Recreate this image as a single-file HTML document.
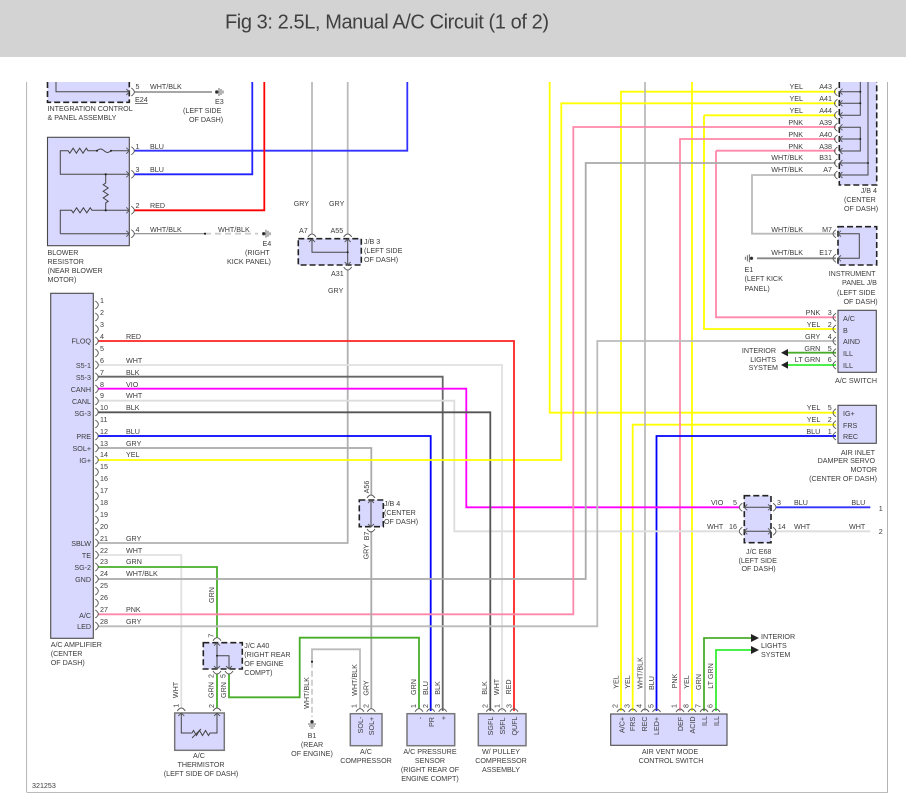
<!DOCTYPE html>
<html><head><meta charset="utf-8"><title>Fig 3</title>
<style>
html,body{margin:0;padding:0;background:#fff;width:906px;height:809px;overflow:hidden}
svg{display:block}
text{font-family:"Liberation Sans",sans-serif;font-size:7.15px;fill:#3c3c3c}
.e{text-anchor:end}.m{text-anchor:middle}
.w{fill:none;stroke-width:1.8;stroke-linejoin:miter}
.i{fill:none;stroke:#444;stroke-width:1}
.b{fill:#d8d8ff;stroke:#4a4a4a;stroke-width:1.1}
.bg{fill:#d8d8ff;stroke:#777;stroke-width:1.5}
.d{fill:#d8d8ff;stroke:#222;stroke-width:1.6;stroke-dasharray:6 3}
.c{fill:none;stroke:#555;stroke-width:.9}
</style></head><body>
<svg width="906" height="809" viewBox="0 0 906 809" xmlns="http://www.w3.org/2000/svg">
<defs>
<filter id="s" x="0" y="0" width="100%" height="100%"><feGaussianBlur stdDeviation="0.25"/></filter>
<g id="cr" class="c"><path d="M-3-3L0 0L-3 3M2-4Q5-2 5 0Q5 2 2 4"/></g>
<g id="cl" class="c"><path d="M3-3L0 0L3 3M-2-4Q-5-2-5 0Q-5 2-2 4"/></g>
<g id="ct" class="c"><path d="M-3 3L0 0L3 3M-4-2Q-2-5 0-5Q2-5 4-2"/></g>
<g id="cb" class="c"><path d="M-3-3L0 0L3-3M-4 2Q-2 5 0 5Q2 5 4 2"/></g>
<g id="car" class="c"><path d="M2-4Q5-2 5 0Q5 2 2 4"/></g>
<g id="cal" class="c"><path d="M-2-4Q-5-2-5 0Q-5 2-2 4"/></g>
<g id="cat" class="c"><path d="M-4-2Q-2-5 0-5Q2-5 4-2"/></g>
</defs>
<rect width="906" height="57" fill="#d3d3d3"/>
<text x="225" y="28.5" style="font-size:20px;fill:#404040" textLength="324" lengthAdjust="spacing">Fig 3: 2.5L, Manual A/C Circuit (1 of 2)</text>
<g filter="url(#s)">
<path d="M26.5 82V792.5H888V82" fill="none" stroke="#777" stroke-width="1.1"/>

<!-- boxes -->
<path d="M47.5 82V102.3H129.3V82" class="d"/>
<rect x="47.5" y="137.3" width="81.8" height="108.4" class="b"/>
<rect x="50.7" y="293.3" width="42.6" height="345" class="b"/>
<rect x="298.3" y="238.7" width="63" height="26.3" class="d"/>
<rect x="359.3" y="500" width="24" height="26.7" class="d"/>
<rect x="203.3" y="642.7" width="39" height="26.3" class="d"/>
<rect x="174.7" y="713" width="49.6" height="37.3" class="bg"/>
<rect x="350.3" y="713.7" width="31.7" height="32" class="bg"/>
<rect x="407" y="713.7" width="47.7" height="32" class="bg"/>
<rect x="478.3" y="713.7" width="47.7" height="32" class="bg"/>
<rect x="610.7" y="714" width="116.3" height="31.3" class="b"/>
<path d="M839.3 82V185H876.7V82" class="d"/>
<rect x="838" y="226.7" width="38.7" height="38.3" class="d"/>
<rect x="838" y="310.3" width="38.3" height="62" class="b"/>
<rect x="838" y="405.3" width="38.3" height="38" class="b"/>
<rect x="744.3" y="495.7" width="26.7" height="47" class="d"/>

<!-- wires -->
<g class="w">
<path stroke="#bbb" d="M312 82V234"/>
<path stroke="#bbb" d="M347.7 82V234"/>
<path stroke="#b0b0b0" d="M97.7 543H347.7V270"/>
<path stroke="#3333ff" d="M134 150.7H407.3V82"/>
<path stroke="#2222ff" d="M134 174.3H252.3V82"/>
<path stroke="#ff0000" d="M134 210.3H264.3V82"/>
<path stroke="#999" d="M134 92H212"/>
<path stroke="#888" d="M134 233.7H205" stroke-width="1.1"/>
<path stroke="#ccc" d="M205 233.7H258" stroke-dasharray="6 4"/>

<path stroke="#ffff00" d="M549.7 82V412.7H836"/>
<path stroke="#ffff00" d="M692 82V711"/>
<path stroke="#ffff00" d="M621 711V91.7H836"/>
<path stroke="#ffff00" d="M632.7 711V424.7H836"/>
<path stroke="#ffff00" d="M704 115.3H836M704 115.3V329H836"/>
<path stroke="#bbb" d="M645 82V711"/>
<path stroke="#ff88aa" d="M680 711V139H836"/>
<path stroke="#ff88aa" d="M716 150.7H836M716 150.7V317.3H836"/>
<path stroke="#0000ff" d="M656.5 711V436H836"/>
<path stroke="#bbb" d="M836 175H752V233.7H836"/>
<path stroke="#888" d="M757 258.3H836"/>
<path stroke="#4aad2a" d="M788 352.7H836"/>
<path stroke="#33ee33" d="M788 365H836"/>

<path stroke="#e0e0e0" d="M97.7 365H502V711"/>
<path stroke="#666" d="M97.7 376.7H442.7V711"/>
<path stroke="#ff00ff" d="M97.7 388.7H466.3V507.3H739"/>
<path stroke="#ddd" d="M97.7 400.7H454.3V531.3H739"/>
<path stroke="#555" d="M97.7 412.3H490.3V711"/>
<path stroke="#0000ff" d="M97.7 436H430.7V711"/>
<path stroke="#aaa" d="M97.7 448H371.3V495"/>
<path stroke="#ffff00" d="M97.7 460H561.3V103.3H836"/>
<path stroke="#ff2222" d="M97.7 341H514V711"/>
<path stroke="#e0e0e0" d="M97.7 555H181.3V708"/>
<path stroke="#4aad2a" d="M97.7 567H217V638"/>
<path stroke="#aaa" d="M97.7 579H585.7V163H836"/>
<path stroke="#ff88aa" d="M97.7 614.3H573.3V127H836"/>
<path stroke="#bbb" d="M97.7 626.3H597.3V341H836"/>
<path stroke="#aaa" d="M371.3 531V709"/>
<path stroke="#4aad2a" d="M217 674V708"/>
<path stroke="#4aad2a" d="M229 674V697.3H299.7V637.7H419V709"/>
<path stroke="#bbb" d="M312 661.7V649.3H360V709"/>
<path stroke="#ccc" d="M312 661.7V717" stroke-dasharray="6 3"/>
<path stroke="#3333ff" d="M776 507.3H870.3"/>
<path stroke="#ddd" d="M776 531.3H870.3"/>
<path stroke="#4aad2a" d="M704 711V638H751"/>
<path stroke="#33ee33" d="M716 711V650H751"/>
</g>

<!-- internals -->
<path class="i" d="M56 82V91.7H129"/>
<path class="i" d="M129 150.7H111M97 150.7H88l-1.7-2.5-3.3 5-3.3-5-3.3 5-3.3-5-3.3 5-1.7-2.5H60.3V174.3H129"/>
<path class="i" d="M97 150.7q3.5-3.5 7 0t7 0"/>
<path class="i" d="M105.7 174.3V183l-2.5 1.7 5 3.3-5 3.3 5 3.3-5 3.3 5 3.3-2.5 1.7V210.3"/>
<path class="i" d="M129 210.3H92l-1.8-2.5-3.4 5-3.4-5-3.4 5-3.4-5-3.4 5-1.7-2.5H60.3V233.7"/>
<path class="i" d="M60.3 233.7H129" stroke-width="1.5"/>
<path class="i" d="M312 239V252.3H347.7M347.7 239V265"/>
<path class="i" d="M371 500V527"/>
<path class="i" d="M217 643V669M217 655.7H229V669"/>
<path class="i" d="M181.3 714V733H192l1.5-2.5 3 5 3-5 3 5 3-5 3 5 1.5-2.5H217V714"/>
<path class="i" d="M192 738L201 729"/>
<path class="i" d="M840 91.7H860.3M840 103.3H860.3M840 115.3H860.3V82M840 127.3H860.3V151H840M840 139H860.3M840 163H868M840 175H868V82"/>
<path class="i" d="M838 233.7H859.3V258.3H838"/>
<path class="i" d="M744.3 507.3H771M744.3 531.3H771"/>
<g fill="#222">
<circle cx="97" cy="150.7" r="1"/><circle cx="111" cy="150.7" r="1"/>
<circle cx="105.7" cy="174.3" r="1.1"/><circle cx="105.7" cy="210.3" r="1.1"/>
<circle cx="205" cy="233.7" r="1.1"/><circle cx="347.7" cy="252.3" r="1"/>
<circle cx="217" cy="655.7" r="1"/><circle cx="312" cy="661.7" r="1.1"/>
<circle cx="860.3" cy="91.7" r="1"/><circle cx="860.3" cy="103.3" r="1"/>
<circle cx="860.3" cy="139" r="1"/><circle cx="868" cy="163" r="1"/>
<path d="M781 352.7L788 349V356.4ZM781 365L788 361.3V368.7ZM759 638L751 634V642ZM759 650L751 646V654Z"/>
</g>

<!-- grounds -->
<g stroke="#444" stroke-width=".8" fill="#222">
<circle cx="216.7" cy="92" r="1.3"/><path d="M219 88V96M221 89V95M223 90.5V93.5"/>
<circle cx="263.7" cy="233.7" r="1.3"/><path d="M266 229.7V237.7M268 230.7V236.7M270 232.2V235.2"/>
<circle cx="751.5" cy="258.3" r="1.3"/><path d="M749.3 254.3V262.3M747.3 255.3V261.3M745.3 256.8V259.8"/>
<circle cx="312" cy="721.7" r="1.3"/><path d="M308 724H316M309 726H315M310.5 728H313.5"/>
</g>

<!-- connectors -->
<use href="#cr" x="129.3" y="92"/><use href="#cr" x="129.3" y="150.7"/><use href="#cr" x="129.3" y="174.3"/><use href="#cr" x="129.3" y="210.3"/><use href="#cr" x="129.3" y="233.7"/>
<use href="#ct" x="312" y="239"/><use href="#ct" x="347.7" y="239"/><use href="#cb" x="347.7" y="265"/>
<use href="#ct" x="371" y="500"/><use href="#cb" x="371" y="527"/>
<use href="#ct" x="217" y="642.7"/><use href="#cb" x="217" y="669"/><use href="#cb" x="229" y="669"/>
<use href="#ct" x="181.3" y="713"/><use href="#ct" x="217" y="713"/>
<use href="#cl" x="839.5" y="91.7"/><use href="#cl" x="839.5" y="103.3"/><use href="#cl" x="839.5" y="115.3"/><use href="#cl" x="839.5" y="127.3"/><use href="#cl" x="839.5" y="139"/><use href="#cl" x="839.5" y="151"/><use href="#cl" x="839.5" y="163"/><use href="#cl" x="839.5" y="175"/>
<use href="#cl" x="838" y="233.7"/><use href="#cl" x="838" y="258.3"/>
<use href="#cal" x="838" y="317.3"/><use href="#cal" x="838" y="329"/><use href="#cal" x="838" y="341"/><use href="#cal" x="838" y="352.7"/><use href="#cal" x="838" y="365"/>
<use href="#cal" x="838" y="412.7"/><use href="#cal" x="838" y="424.7"/><use href="#cal" x="838" y="436"/>
<use href="#cl" x="744.3" y="507.3"/><use href="#cl" x="744.3" y="531.3"/><use href="#cr" x="771" y="507.3"/><use href="#cr" x="771" y="531.3"/>
<use href="#car" x="93.3" y="305"/><use href="#car" x="93.3" y="317"/><use href="#car" x="93.3" y="329"/><use href="#car" x="93.3" y="341"/><use href="#car" x="93.3" y="353"/><use href="#car" x="93.3" y="365"/><use href="#car" x="93.3" y="377"/><use href="#car" x="93.3" y="389"/><use href="#car" x="93.3" y="401"/><use href="#car" x="93.3" y="412"/><use href="#car" x="93.3" y="424"/><use href="#car" x="93.3" y="436"/><use href="#car" x="93.3" y="448"/><use href="#car" x="93.3" y="460"/><use href="#car" x="93.3" y="472"/><use href="#car" x="93.3" y="484"/><use href="#car" x="93.3" y="496"/><use href="#car" x="93.3" y="508"/><use href="#car" x="93.3" y="520"/><use href="#car" x="93.3" y="532"/><use href="#car" x="93.3" y="543"/><use href="#car" x="93.3" y="555"/><use href="#car" x="93.3" y="567"/><use href="#car" x="93.3" y="579"/><use href="#car" x="93.3" y="591"/><use href="#car" x="93.3" y="603"/><use href="#car" x="93.3" y="614"/><use href="#car" x="93.3" y="626"/>
<use href="#cat" x="360" y="713.7"/><use href="#cat" x="371.3" y="713.7"/>
<use href="#cat" x="419" y="713.7"/><use href="#cat" x="430.7" y="713.7"/><use href="#cat" x="442.7" y="713.7"/>
<use href="#cat" x="490.3" y="713.7"/><use href="#cat" x="502" y="713.7"/><use href="#cat" x="514" y="713.7"/>
<use href="#cat" x="621" y="714"/><use href="#cat" x="632.7" y="714"/><use href="#cat" x="645" y="714"/><use href="#cat" x="656.5" y="714"/><use href="#cat" x="680" y="714"/><use href="#cat" x="692" y="714"/><use href="#cat" x="704" y="714"/><use href="#cat" x="716" y="714"/>

<!-- left top labels -->
<text x="135.5" y="89">5</text><text x="150" y="89">WHT/BLK</text>
<text x="135" y="102" text-decoration="underline">E24</text>
<text x="215" y="104">E3</text><text x="183" y="113">(LEFT SIDE</text><text x="189" y="122">OF DASH)</text>
<text x="47.5" y="111">INTEGRATION CONTROL</text><text x="47.5" y="120">&amp; PANEL ASSEMBLY</text>
<text x="135.5" y="149">1</text><text x="150" y="149">BLU</text>
<text x="135.5" y="172">3</text><text x="150" y="172">BLU</text>
<text x="135.5" y="208">2</text><text x="150" y="208">RED</text>
<text x="135.5" y="232">4</text><text x="150" y="232">WHT/BLK</text><text x="218" y="232">WHT/BLK</text>
<text x="262.5" y="246">E4</text><text x="245" y="255">(RIGHT</text><text x="227" y="264">KICK PANEL)</text>
<text x="47.5" y="255">BLOWER</text><text x="47.5" y="264">RESISTOR</text><text x="47.5" y="273">(NEAR BLOWER</text><text x="47.5" y="282">MOTOR)</text>

<text x="293.7" y="206">GRY</text><text x="329" y="206">GRY</text>
<text x="299" y="233">A7</text><text x="330.5" y="233">A55</text>
<text x="364" y="244">J/B 3</text><text x="364" y="253">(LEFT SIDE</text><text x="364" y="262">OF DASH)</text>
<text x="331" y="276">A31</text><text x="328" y="293">GRY</text>

<!-- J/B 4 right -->
<g class="e">
<text x="803" y="89">YEL</text><text x="803" y="101">YEL</text><text x="803" y="113">YEL</text><text x="803" y="125">PNK</text><text x="803" y="137">PNK</text><text x="803" y="149">PNK</text><text x="803" y="160">WHT/BLK</text><text x="803" y="172">WHT/BLK</text>
<text x="832" y="89">A43</text><text x="832" y="101">A41</text><text x="832" y="113">A44</text><text x="832" y="125">A39</text><text x="832" y="137">A40</text><text x="832" y="149">A38</text><text x="832" y="160">B31</text><text x="832" y="172">A7</text>
<text x="877" y="193">J/B 4</text>
<text x="803" y="232">WHT/BLK</text><text x="832" y="232">M7</text>
<text x="803" y="255">WHT/BLK</text><text x="832" y="255">E17</text>
<text x="820.3" y="315">PNK</text><text x="831.7" y="315">3</text>
<text x="820.3" y="327">YEL</text><text x="831.7" y="327">2</text>
<text x="820.3" y="339">GRY</text><text x="831.7" y="339">4</text>
<text x="820.3" y="351">GRN</text><text x="831.7" y="351">5</text>
<text x="820.3" y="362">LT GRN</text><text x="831.7" y="362">6</text>
<text x="776" y="353">INTERIOR</text><text x="776" y="362">LIGHTS</text><text x="778" y="370">SYSTEM</text>
<text x="877" y="383">A/C SWITCH</text>
<text x="820.3" y="410">YEL</text><text x="831.7" y="410">5</text>
<text x="820.3" y="422">YEL</text><text x="831.7" y="422">2</text>
<text x="820.3" y="434">BLU</text><text x="831.7" y="434">1</text>
<text x="875" y="455">AIR INLET</text><text x="875" y="463">DAMPER SERVO</text><text x="877" y="472">MOTOR</text><text x="877" y="481">(CENTER OF DASH)</text>
<text x="723.3" y="505">VIO</text><text x="737" y="505">5</text><text x="865.3" y="505">BLU</text>
<text x="723.3" y="529">WHT</text><text x="737" y="529">16</text><text x="865.3" y="529">WHT</text>
</g>
<text x="844" y="202">(CENTER</text><text x="844" y="211">OF DASH)</text>
<text x="744.5" y="272">E1</text><text x="744.5" y="281">(LEFT KICK</text><text x="744.5" y="291">PANEL)</text>
<text x="828.7" y="276">INSTRUMENT</text><text x="842" y="285">PANEL J/B</text><text x="837" y="295">(LEFT SIDE</text><text x="843.5" y="304">OF DASH)</text>
<text x="843" y="321">A/C</text><text x="843" y="333">B</text><text x="843" y="344">AIND</text><text x="843" y="356">ILL</text><text x="843" y="368">ILL</text>
<text x="843" y="416">IG+</text><text x="843" y="428">FRS</text><text x="843" y="439">REC</text>
<text x="777" y="505">3</text><text x="794" y="505">BLU</text><text x="878.7" y="511">1</text>
<text x="777.7" y="529">14</text><text x="794" y="529">WHT</text><text x="878.7" y="534">2</text>
<text x="746" y="554">J/C E68</text><text x="738.5" y="563">(LEFT SIDE</text><text x="741.5" y="571">OF DASH)</text>

<!-- amp -->
<g class="e">
<text x="91" y="343.5">FLOQ</text><text x="91" y="368">S5-1</text><text x="91" y="380">S5-3</text><text x="91" y="392">CANH</text><text x="91" y="404">CANL</text><text x="91" y="416">SG-3</text><text x="91" y="439">PRE</text><text x="91" y="451">SOL+</text><text x="91" y="463">IG+</text><text x="91" y="546">SBLW</text><text x="91" y="558">TE</text><text x="91" y="570">SG-2</text><text x="91" y="582">GND</text><text x="91" y="618">A/C</text><text x="91" y="629">LED</text>
</g>
<text x="100" y="303">1</text><text x="100" y="315">2</text><text x="100" y="327">3</text><text x="100" y="339">4</text><text x="100" y="351">5</text><text x="100" y="363">6</text><text x="100" y="375">7</text><text x="100" y="387">8</text><text x="100" y="398">9</text><text x="100" y="410">10</text><text x="100" y="422">11</text><text x="100" y="434">12</text><text x="100" y="446">13</text><text x="100" y="457">14</text><text x="100" y="469">15</text><text x="100" y="481">16</text><text x="100" y="493">17</text><text x="100" y="505">18</text><text x="100" y="517">19</text><text x="100" y="529">20</text><text x="100" y="541">21</text><text x="100" y="553">22</text><text x="100" y="564">23</text><text x="100" y="576">24</text><text x="100" y="588">25</text><text x="100" y="600">26</text><text x="100" y="612">27</text><text x="100" y="624">28</text>
<text x="126" y="339">RED</text><text x="126" y="363">WHT</text><text x="126" y="375">BLK</text><text x="126" y="387">VIO</text><text x="126" y="398">WHT</text><text x="126" y="410">BLK</text><text x="126" y="434">BLU</text><text x="126" y="446">GRY</text><text x="126" y="457">YEL</text><text x="126" y="541">GRY</text><text x="126" y="553">WHT</text><text x="126" y="564">GRN</text><text x="126" y="576">WHT/BLK</text><text x="126" y="612">PNK</text><text x="126" y="624">GRY</text>
<text x="50.7" y="647">A/C AMPLIFIER</text><text x="50.7" y="656">(CENTER</text><text x="50.7" y="665">OF DASH)</text>

<!-- bottom labels horizontal -->
<text x="244.3" y="648">J/C A40</text><text x="244.3" y="657">(RIGHT REAR</text><text x="244.3" y="666">OF ENGINE</text><text x="244.3" y="675">COMPT)</text>
<text x="384" y="506">J/B 4</text><text x="384" y="515">(CENTER</text><text x="384" y="524">OF DASH)</text>
<text x="32" y="788">321253</text>
<g class="m">
<text x="199" y="758">A/C</text><text x="201" y="767">THERMISTOR</text><text x="201" y="776">(LEFT SIDE OF DASH)</text>
<text x="312" y="738">B1</text><text x="312" y="747">(REAR</text><text x="312" y="756">OF ENGINE)</text>
<text x="366" y="754">A/C</text><text x="366" y="763">COMPRESSOR</text>
<text x="430" y="754">A/C PRESSURE</text><text x="430" y="763">SENSOR</text><text x="430" y="772">(RIGHT REAR OF</text><text x="430" y="781">ENGINE COMPT)</text>
<text x="501" y="754">W/ PULLEY</text><text x="501" y="763">COMPRESSOR</text><text x="501" y="772">ASSEMBLY</text>
<text x="670" y="754">AIR VENT MODE</text><text x="671" y="763">CONTROL SWITCH</text>
</g>
<text x="761" y="639">INTERIOR</text><text x="761" y="648">LIGHTS</text><text x="761" y="657">SYSTEM</text>

<!-- rotated -->
<g class="m">
<text transform="translate(214.2 595) rotate(-90)">GRN</text>
<text transform="translate(213.5 635.7) rotate(-90)">7</text>
<text transform="translate(213.5 676) rotate(-90)">2</text>
<text transform="translate(225.5 676) rotate(-90)">5</text>
<text transform="translate(213.5 690) rotate(-90)">GRN</text>
<text transform="translate(226.2 690) rotate(-90)">GRN</text>
<text transform="translate(178.2 690) rotate(-90)">WHT</text>
<text transform="translate(178.5 705.7) rotate(-90)">1</text>
<text transform="translate(214.2 706) rotate(-90)">2</text>
<text transform="translate(309.2 693) rotate(-90)">WHT/BLK</text>
<text transform="translate(369.2 487) rotate(-90)">A56</text>
<text transform="translate(369.2 536) rotate(-90)">B7</text>
<text transform="translate(368.5 551.7) rotate(-90)">GRY</text>
<text transform="translate(357.2 680) rotate(-90)">WHT/BLK</text>
<text transform="translate(368.5 688) rotate(-90)">GRY</text>
<text transform="translate(356.5 706) rotate(-90)">1</text>
<text transform="translate(368.5 706) rotate(-90)">2</text>
<text transform="translate(362.8 725) rotate(-90)">SOL-</text>
<text transform="translate(373.8 726) rotate(-90)">SOL+</text>
<text transform="translate(415.8 687) rotate(-90)">GRN</text>
<text transform="translate(428.2 688) rotate(-90)">BLU</text>
<text transform="translate(439.8 688) rotate(-90)">BLK</text>
<text transform="translate(416.2 706) rotate(-90)">1</text>
<text transform="translate(428.2 706) rotate(-90)">2</text>
<text transform="translate(440.2 706) rotate(-90)">3</text>
<text transform="translate(422.5 718) rotate(-90)">-</text>
<text transform="translate(434.2 722) rotate(-90)">PR</text>
<text transform="translate(446 718) rotate(-90)">+</text>
<text transform="translate(487.2 688) rotate(-90)">BLK</text>
<text transform="translate(499.2 687) rotate(-90)">WHT</text>
<text transform="translate(511.2 687) rotate(-90)">RED</text>
<text transform="translate(487.5 706) rotate(-90)">2</text>
<text transform="translate(499.5 706) rotate(-90)">1</text>
<text transform="translate(511.5 706) rotate(-90)">3</text>
<text transform="translate(493.2 726) rotate(-90)">SGFL</text>
<text transform="translate(505.2 726) rotate(-90)">S5FL</text>
<text transform="translate(517.2 726) rotate(-90)">QUFL</text>
<text transform="translate(618.5 682) rotate(-90)">YEL</text>
<text transform="translate(630.2 682) rotate(-90)">YEL</text>
<text transform="translate(642.5 673) rotate(-90)">WHT/BLK</text>
<text transform="translate(654.2 683) rotate(-90)">BLU</text>
<text transform="translate(676.8 681) rotate(-90)">PNK</text>
<text transform="translate(689.2 682) rotate(-90)">YEL</text>
<text transform="translate(701.2 682) rotate(-90)">GRN</text>
<text transform="translate(713.2 676) rotate(-90)">LT GRN</text>
<text transform="translate(617.5 706) rotate(-90)">2</text>
<text transform="translate(629.5 706) rotate(-90)">3</text>
<text transform="translate(641.5 706) rotate(-90)">4</text>
<text transform="translate(653.5 706) rotate(-90)">5</text>
<text transform="translate(676.5 706) rotate(-90)">1</text>
<text transform="translate(688.5 706) rotate(-90)">8</text>
<text transform="translate(700.5 706) rotate(-90)">7</text>
<text transform="translate(712.5 706) rotate(-90)">6</text>
<text transform="translate(624.5 725) rotate(-90)">A/C+</text>
<text transform="translate(635.2 724) rotate(-90)">FRS</text>
<text transform="translate(647.2 724) rotate(-90)">REC</text>
<text transform="translate(659.2 726) rotate(-90)">LED+</text>
<text transform="translate(683.2 724) rotate(-90)">DEF</text>
<text transform="translate(695.2 725) rotate(-90)">ACID</text>
<text transform="translate(707.2 721) rotate(-90)">ILL</text>
<text transform="translate(719.2 721) rotate(-90)">ILL</text>
</g>
</g>
</svg>
</body></html>
